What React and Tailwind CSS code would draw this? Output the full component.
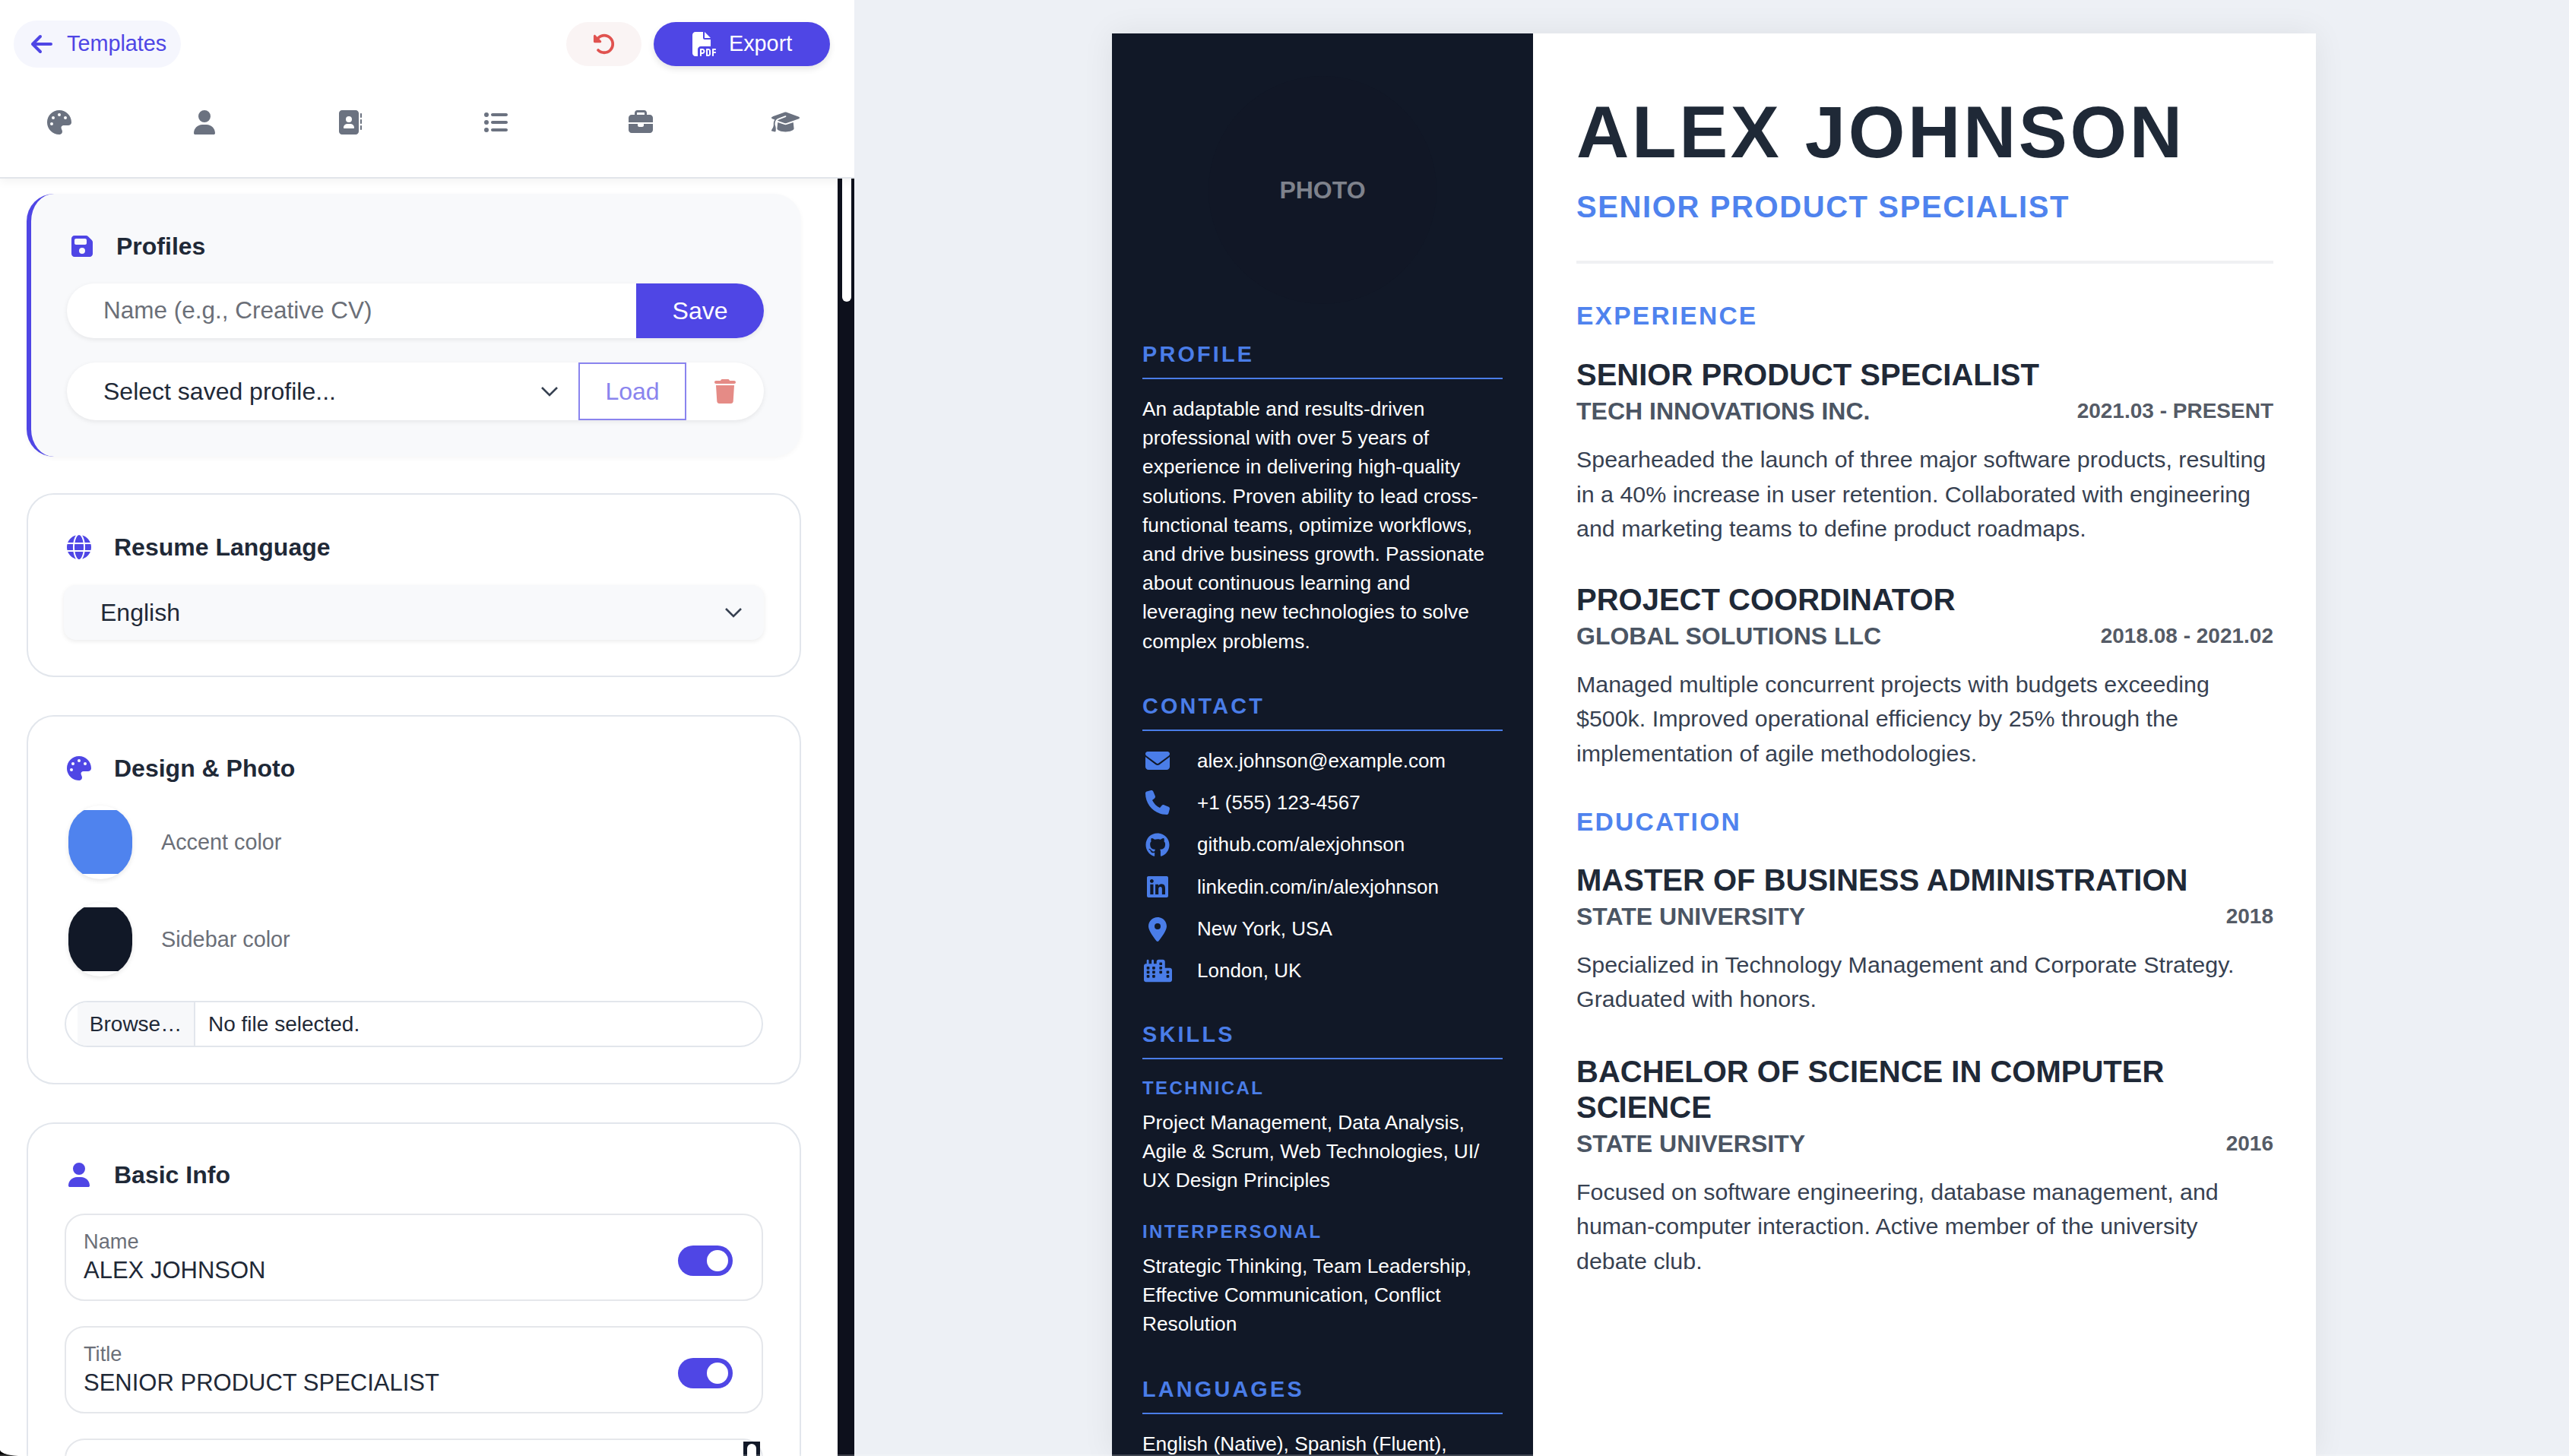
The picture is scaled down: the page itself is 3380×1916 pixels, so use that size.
import React from 'react';
import {
  FaArrowLeft, FaRotateLeft, FaFilePdf, FaPalette, FaUser, FaAddressBook, FaListUl, FaBriefcase,
  FaGraduationCap, FaFloppyDisk, FaTrash, FaGlobe, FaEnvelope, FaPhone, FaGithub, FaLinkedin,
  FaLocationDot, FaCity,
} from 'react-icons/fa6';

const Chevron = () => (
  <svg width="24" height="14" viewBox="0 0 24 14" fill="none" className="shrink-0">
    <path d="M2 2l10 10L22 2" stroke="#374151" strokeWidth="2.6" />
  </svg>
);

const Card = ({ icon: Icon, title, className, children }) => (
  <section className={`border-2 border-[#e2e6ec] rounded-[36px] pl-[48px] pr-[48px] ${className}`}>
    <div className="flex items-center h-[40px]">
      <div className="w-[38px] mr-[27px] flex justify-center">
        <Icon className="text-[32px] text-[#4f46e5]" />
      </div>
      <h3 className="text-[32px] leading-[40px] font-bold text-[#1f2937]">{title}</h3>
    </div>
    {children}
  </section>
);

const Swatch = ({ color, label }) => (
  <div className="flex items-center h-[97px]">
    <div className="w-[84px] h-[97px] ml-[5px] rounded-full overflow-hidden bg-white shadow-[0_2px_6px_rgba(0,0,0,0.1)] pt-[6px]">
      <div className={`h-[84px] ${color}`} />
    </div>
    <span className="ml-[38px] text-[28.8px] text-[#6b6f78]">{label}</span>
  </div>
);

const Field = ({ label, value }) => (
  <div className="h-[115px] border-2 border-[#e5e7eb] rounded-[26px] pl-[23px] pr-[38px] flex items-center justify-between">
    <div>
      <div className="text-[27.2px] leading-[34px] text-[#6b6f78]">{label}</div>
      <div className="text-[31px] leading-[42px] text-[#1f2937]">{value}</div>
    </div>
    <div className="w-[72px] h-[40px] mt-[8px] rounded-full bg-[#4f46e5] flex items-center justify-end pr-[6px]">
      <div className="w-[28px] h-[28px] rounded-full bg-white" />
    </div>
  </div>
);

const tabs = [
  [FaPalette, 'text-[32px]'],
  [FaUser, 'text-[32px]'],
  [FaAddressBook, 'text-[32px]'],
  [FaListUl, 'text-[32px]'],
  [FaBriefcase, 'text-[32px]'],
  [FaGraduationCap, 'text-[37px]'],
];

const SideHead = ({ children }) => (
  <h2 className="text-[28.8px] leading-[33px] font-bold tracking-[3.2px] text-[#4a7de8] pb-[14px] border-b-2 border-[#4a7de8]">
    {children}
  </h2>
);

const contacts = [
  [FaEnvelope, 'alex.johnson@example.com', 'text-[32px]'],
  [FaPhone, '+1 (555) 123-4567', 'text-[32px]'],
  [FaGithub, 'github.com/alexjohnson', 'text-[32px]'],
  [FaLinkedin, 'linkedin.com/in/alexjohnson', 'text-[32px]'],
  [FaLocationDot, 'New York, USA', 'text-[32px]'],
  [FaCity, 'London, UK', 'text-[37px]'],
];

const MainHead = ({ className, children }) => (
  <h2 className={`text-[33.6px] leading-[40px] font-bold tracking-[2.2px] text-[#4f83ee] ${className}`}>{children}</h2>
);

const Entry = ({ title, org, date, className, children }) => (
  <div className={className}>
    <h3 className="text-[40px] leading-[47px] font-bold text-[#1f2937]">{title}</h3>
    <div className="flex justify-between items-center mt-[6px] h-[36px]">
      <span className="text-[32px] font-bold text-[#4b5563]">{org}</span>
      <span className="text-[28px] font-bold text-[#555b66]">{date}</span>
    </div>
    <p className="mt-[23px] text-[30.4px] leading-[45.6px] text-[#374151]">{children}</p>
  </div>
);

export default function App() {
  return (
    <div className="relative flex w-[3380px] h-[1916px] overflow-hidden bg-black font-['Liberation_Sans',Arial,sans-serif]">
      <aside className="w-[1124px] h-[1916px] shrink-0 flex flex-col bg-white rounded-bl-[30px_8px] overflow-hidden">
        <header className="h-[235px] shrink-0 bg-white border-b-2 border-[#e2e5ea] shadow-[0_4px_12px_rgba(0,0,0,0.05)] z-10">
          <div className="flex items-start justify-between pl-[18px] pr-[32px] pt-[27px]">
            <button className="h-[62px] w-[220px] rounded-full bg-[#f5f6fd] text-[#4f46e5] flex items-center pl-[21px] text-[28.8px]">
              <FaArrowLeft className="text-[32px] mr-[17px]" />
              Templates
            </button>
            <div className="flex items-center gap-[16px] pt-[2px]">
              <button className="h-[58px] w-[99px] rounded-full bg-[#faf4f4] flex items-center justify-center">
                <FaRotateLeft className="text-[30px] text-[#e0524f]" />
              </button>
              <button className="h-[58px] w-[232px] rounded-full bg-[#4f46e5] text-white flex items-center pl-[51px] text-[28.8px] shadow-[0_4px_8px_rgba(0,0,0,0.1)]">
                <FaFilePdf className="text-[32px] mr-[16px]" />
                Export
              </button>
            </div>
          </div>
          <div className="flex justify-between items-center pl-[60px] pr-[72px] mt-[53px]">
            {tabs.map(([Icon, size], i) => (
              <div key={i} className="w-[36px] flex justify-center">
                <Icon className={`${size} text-[#6b7280] shrink-0`} />
              </div>
            ))}
          </div>
        </header>

        <div className="flex flex-1 min-h-0">
          <div className="w-[1102px] shrink-0 overflow-hidden pl-[35px] pr-[48px] pt-[20px] flex flex-col">
            <section className="shrink-0 h-[346px] border-l-[6px] border-[#4f46e5] bg-[#f8f9fb] rounded-[36px] pl-[47px] pr-[49px] pt-[49px] shadow-[0_2px_6px_rgba(0,0,0,0.04)]">
              <div className="flex items-center h-[40px]">
                <div className="w-[40px] mr-[25px] flex justify-center">
                  <FaFloppyDisk className="text-[32px] text-[#4f46e5]" />
                </div>
                <h3 className="text-[32px] leading-[40px] font-bold text-[#1f2937]">Profiles</h3>
              </div>
              <div className="mt-[29px] h-[72px] flex rounded-full overflow-hidden bg-white shadow-[0_2px_6px_rgba(0,0,0,0.08)]">
                <div className="flex-1 flex items-center pl-[48px] text-[31.5px] text-[#6b6f78]">Name (e.g., Creative CV)</div>
                <button className="w-[168px] bg-[#4f46e5] text-white text-[32px]">Save</button>
              </div>
              <div className="mt-[32px] h-[76px] flex items-stretch rounded-full bg-white shadow-[0_2px_6px_rgba(0,0,0,0.08)]">
                <div className="w-[673px] flex items-center justify-between pl-[48px] pr-[26px] text-[32px] text-[#1f2937]">
                  <span>Select saved profile...</span>
                  <Chevron />
                </div>
                <button className="w-[142px] border-2 border-[#8a84ee] text-[#8a84ee] text-[32px]">Load</button>
                <div className="flex-1 flex items-center pl-[35px]">
                  <FaTrash className="text-[32px] text-[#e58b86]" />
                </div>
              </div>
            </section>

            <Card icon={FaGlobe} title="Resume Language" className="shrink-0 mt-[48px] h-[242px] pt-[49px]">
              <div className="mt-[30px] -mx-[1px] h-[72px] rounded-[16px] bg-[#f8f9fb] shadow-[0_2px_6px_rgba(0,0,0,0.08)] flex items-center justify-between pl-[48px] pr-[28px] text-[32px] text-[#1f2937]">
                <span>English</span>
                <Chevron />
              </div>
            </Card>

            <Card icon={FaPalette} title="Design & Photo" className="shrink-0 mt-[50px] h-[486px] pt-[48px]">
              <div className="mt-[29px] flex flex-col gap-[31px]">
                <Swatch color="bg-[#4f83ee]" label="Accent color" />
                <Swatch color="bg-[#111827]" label="Sidebar color" />
              </div>
              <div className="mt-[32px] h-[61px] border-2 border-[#e2e6ec] rounded-full flex items-stretch pl-[15px] text-[28px] text-[#1f2937] overflow-hidden">
                <div className="w-[155px] bg-[#f7f8fa] border-r-2 border-[#e2e6ec] flex items-center justify-center">Browse…</div>
                <div className="flex items-center pl-[17px]">No file selected.</div>
              </div>
            </Card>

            <Card icon={FaUser} title="Basic Info" className="shrink-0 mt-[50px] pt-[47px]">
              <div className="mt-[31px] flex flex-col gap-[33px]">
                <Field label="Name" value="ALEX JOHNSON" />
                <Field label="Title" value="SENIOR PRODUCT SPECIALIST" />
                <div className="h-[115px] border-2 border-[#e5e7eb] rounded-[26px] flex justify-end items-start pr-[2px] pt-[2px]">
                  <div className="w-[22px] h-[40px] bg-[#111827] flex justify-center pt-[3px]">
                    <div className="w-[12px] h-[30px] bg-white rounded-t-full" />
                  </div>
                </div>
              </div>
            </Card>
          </div>
          <div className="w-[22px] shrink-0 bg-[#0d101c] pl-[6px]">
            <div className="w-[12px] h-[162px] bg-white rounded-b-full" />
          </div>
        </div>
      </aside>

      <main className="flex-1 bg-[#edf0f5] pt-[44px] pl-[339px]">
        <div className="w-[1584px] h-[1872px] flex bg-white shadow-[0_0_40px_rgba(0,0,0,0.07)]">
          <div className="w-[554px] shrink-0 bg-[#111827] pl-[40px] pr-[40px] pt-[56px] text-white">
            <div className="w-[300px] h-[300px] mx-auto rounded-full bg-[#111726] flex items-center justify-center text-[32px] font-bold text-[#7e828c]">
              PHOTO
            </div>

            <div className="mt-[50px]">
              <SideHead>PROFILE</SideHead>
              <p className="mt-[20px] text-[26.3px] leading-[38.2px]">
                An adaptable and results-driven professional with over 5 years of experience in delivering high-quality solutions. Proven ability to lead cross-functional teams, optimize workflows, and drive business growth. Passionate about continuous learning and leveraging new technologies to solve complex problems.
              </p>
            </div>

            <div className="mt-[50px]">
              <SideHead>CONTACT</SideHead>
              <ul className="mt-[20px] flex flex-col gap-[17px]">
                {contacts.map(([Icon, text, size]) => (
                  <li key={text} className="flex items-center h-[38.4px] text-[26px]">
                    <div className="w-[40px] flex justify-center mr-[32px]">
                      <Icon className={`${size} text-[#4a7de8] shrink-0`} />
                    </div>
                    {text}
                  </li>
                ))}
              </ul>
            </div>

            <div className="mt-[48px]">
              <SideHead>SKILLS</SideHead>
              <h4 className="mt-[24px] text-[24px] leading-[27.6px] font-bold tracking-[2.4px] text-[#4a7de8]">TECHNICAL</h4>
              <p className="mt-[12px] text-[26.3px] leading-[38.2px]">Project Management, Data Analysis, Agile &amp; Scrum, Web Technologies, UI/<wbr />UX Design Principles</p>
              <h4 className="mt-[35px] text-[24px] leading-[27.6px] font-bold tracking-[2.4px] text-[#4a7de8]">INTERPERSONAL</h4>
              <p className="mt-[12px] text-[26.3px] leading-[38.2px]">Strategic Thinking, Team Leadership, Effective Communication, Conflict Resolution</p>
            </div>

            <div className="mt-[50px]">
              <SideHead>LANGUAGES</SideHead>
              <p className="mt-[20px] text-[26.3px] leading-[38.2px]">English (Native), Spanish (Fluent), French (Basic)</p>
            </div>
          </div>

          <div className="flex-1 min-w-0 pl-[57px] pr-[56px] pt-[82px]">
            <h1 className="text-[96px] leading-[96px] font-bold tracking-[3.6px] text-[#1f2937]">ALEX JOHNSON</h1>
            <div className="mt-[26px] text-[40px] leading-[48px] font-bold tracking-[1.6px] text-[#4f83ee]">SENIOR PRODUCT SPECIALIST</div>
            <div className="mt-[47px] border-b-4 border-[#f0f1f3]" />

            <MainHead className="mt-[49px]">EXPERIENCE</MainHead>
            <Entry className="mt-[34px]" title="SENIOR PRODUCT SPECIALIST" org="TECH INNOVATIONS INC." date="2021.03 - PRESENT">
              Spearheaded the launch of three major software products, resulting in a 40% increase in user retention. Collaborated with engineering and marketing teams to define product roadmaps.
            </Entry>
            <Entry className="mt-[47px]" title="PROJECT COORDINATOR" org="GLOBAL SOLUTIONS LLC" date="2018.08 - 2021.02">
              Managed multiple concurrent projects with budgets exceeding $500k. Improved operational efficiency by 25% through the implementation of agile methodologies.
            </Entry>

            <MainHead className="mt-[47px]">EDUCATION</MainHead>
            <Entry className="mt-[33px]" title="MASTER OF BUSINESS ADMINISTRATION" org="STATE UNIVERSITY" date="2018">
              Specialized in Technology Management and Corporate Strategy. Graduated with honors.
            </Entry>
            <Entry className="mt-[49px]" title="BACHELOR OF SCIENCE IN COMPUTER SCIENCE" org="STATE UNIVERSITY" date="2016">
              Focused on software engineering, database management, and human-computer interaction. Active member of the university debate club.
            </Entry>
          </div>
        </div>
      </main>

      <div className="absolute left-0 right-0 bottom-0 h-[2px] bg-white/20" />
    </div>
  );
}
